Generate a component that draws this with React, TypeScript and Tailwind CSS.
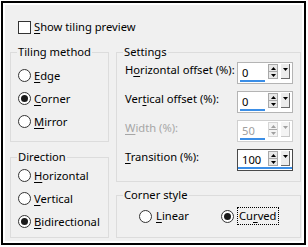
import React from "react";

const font = { fontFamily: '"Segoe UI", "Noto Sans", sans-serif' };

function Radio({ checked }: { checked?: boolean }) {
  return (
    <span className="flex h-[13px] w-[13px] shrink-0 items-center justify-center rounded-full border border-[#333] bg-white">
      {checked && <span className="h-[7px] w-[7px] rounded-full bg-[#1a1a1a]" />}
    </span>
  );
}

function Key({ children }: { children: React.ReactNode }) {
  return <u className="underline-offset-[2px]">{children}</u>;
}

function RadioRow({
  checked,
  children,
}: {
  checked?: boolean;
  children: React.ReactNode;
}) {
  return (
    <div className="flex h-[23px] items-center gap-[3px] pl-[7px]">
      <Radio checked={checked} />
      <span className="whitespace-nowrap leading-[16px]">{children}</span>
    </div>
  );
}

function Group({
  title,
  className,
  children,
}: {
  title: string;
  className: string;
  children: React.ReactNode;
}) {
  return (
    <fieldset className={`border border-[#dcdcdc] ${className}`}>
      <legend className="ml-[6px] px-[1px] leading-[16px]">{title}</legend>
      {children}
    </fieldset>
  );
}

function Tri({ down, gray }: { down?: boolean; gray?: boolean }) {
  return (
    <svg width="5" height="3" viewBox="0 0 5 3">
      <polygon
        points={down ? "0,0 5,0 2.5,3" : "0,3 5,3 2.5,0"}
        fill={gray ? "#a0a0a0" : "#000"}
      />
    </svg>
  );
}

function SpinBox({
  value,
  disabled,
  focused,
}: {
  value: string;
  disabled?: boolean;
  focused?: boolean;
}) {
  return (
    <div
      className={`relative flex h-[22px] w-[56px] shrink-0 border bg-white ${
        focused ? "border-[#4a4a4a]" : disabled ? "border-[#cfcfcf]" : "border-[#b4b4b4]"
      }`}
    >
      <span
        className={`w-[30px] pl-[4px] pt-[2px] leading-[16px] ${
          disabled ? "text-[#a0a0a0]" : ""
        }`}
      >
        {value}
      </span>
      <div
        className={`mt-[1px] flex h-[15px] w-[10px] flex-col border ${
          disabled ? "border-[#d6d6d6] bg-[#f4f4f4]" : "border-[#a8a8a8] bg-[#e8e8e8]"
        }`}
      >
        <div className="flex flex-1 items-center justify-center border-b border-[#a8a8a8]">
          <Tri gray={disabled} />
        </div>
        <div className="flex flex-1 items-center justify-center">
          <Tri down gray={disabled} />
        </div>
      </div>
      <div
        className={`ml-[3px] mt-[1px] flex h-[15px] w-[9px] justify-center border-b border-r pt-[4px] ${
          disabled ? "border-[#c8c8c8] bg-[#f4f4f4]" : "border-[#6a6a6a] bg-[#ececec]"
        }`}
      >
        <Tri down gray={disabled} />
      </div>
      <span
        className={`absolute bottom-[1px] h-[2px] bg-[#3b8ee6] ${
          focused ? "left-0 right-0" : "left-[2px] w-[25px]"
        }`}
      />
    </div>
  );
}

function SettingRow({
  label,
  value,
  disabled,
  focused,
}: {
  label: React.ReactNode;
  value: string;
  disabled?: boolean;
  focused?: boolean;
}) {
  return (
    <div className="flex h-[22px] items-start justify-between pl-[8px] pr-[7px]">
      <span
        className={`whitespace-nowrap leading-[16px] ${
          disabled ? "text-[#a6a6a6]" : ""
        }`}
      >
        {label}
      </span>
      <SpinBox value={value} disabled={disabled} focused={focused} />
    </div>
  );
}

export default function App() {
  return (
    <div
      className="h-[247px] w-[308px] bg-white pb-[2px] pl-[1px] pr-[2px] pt-[1px] text-[11.2px] text-black"
      style={font}
    >
      <div className="flex h-full flex-col border-2 border-black bg-white p-[2px]">
        <div className="flex flex-1 flex-col bg-[#f0f0f0] pl-[5px]">
          <div className="ml-[8px] mt-[14px] flex h-[16px] items-center gap-[3px]">
            <span className="h-[13px] w-[13px] border border-[#333] bg-white" />
            <span className="leading-[16px]">
              <Key>S</Key>how tiling preview
            </span>
          </div>

          <div className="mt-[9px] flex gap-[7px]">
            <div className="flex w-[99px] shrink-0 flex-col gap-[7px]">
              <Group title="Tiling method" className="h-[98px]">
                <div className="mt-[4px]">
                  <RadioRow>
                    <Key>E</Key>dge
                  </RadioRow>
                  <RadioRow checked>
                    <Key>C</Key>orner
                  </RadioRow>
                  <RadioRow>
                    <Key>M</Key>irror
                  </RadioRow>
                </div>
              </Group>
              <Group title="Direction" className="h-[89px]">
                <div className="-mt-[1px]">
                  <RadioRow>
                    <Key>H</Key>orizontal
                  </RadioRow>
                  <RadioRow>
                    <Key>V</Key>ertical
                  </RadioRow>
                  <RadioRow checked>
                    <Key>B</Key>idirectional
                  </RadioRow>
                </div>
              </Group>
            </div>

            <div className="flex w-[185px] shrink-0 flex-col gap-[5px]">
              <Group title="Settings" className="h-[138px]">
                <div className="mt-[2px] flex flex-col gap-[7px]">
                  <SettingRow
                    label={
                      <>
                        H<Key>o</Key>rizontal offset (%):
                      </>
                    }
                    value="0"
                  />
                  <SettingRow
                    label={
                      <>
                        Ver<Key>t</Key>ical offset (%):
                      </>
                    }
                    value="0"
                  />
                  <SettingRow
                    label={
                      <>
                        <Key>W</Key>idth (%):
                      </>
                    }
                    value="50"
                    disabled
                  />
                  <SettingRow
                    label={
                      <>
                        <Key>T</Key>ransition (%):
                      </>
                    }
                    value="100"
                    focused
                  />
                </div>
              </Group>
              <Group title="Corner style" className="h-[51px]">
                <div className="mt-[2px] flex h-[22px] items-center pl-[22px]">
                  <div className="flex w-[82px] items-center gap-[4px]">
                    <Radio />
                    <span className="leading-[16px]">
                      <Key>L</Key>inear
                    </span>
                  </div>
                  <div className="flex items-center gap-[3px]">
                    <Radio checked />
                    <span className="border border-dotted border-black px-[1px] leading-[16px]">
                      Cu<Key>r</Key>ved
                    </span>
                  </div>
                </div>
              </Group>
            </div>
          </div>
        </div>
      </div>
    </div>
  );
}
